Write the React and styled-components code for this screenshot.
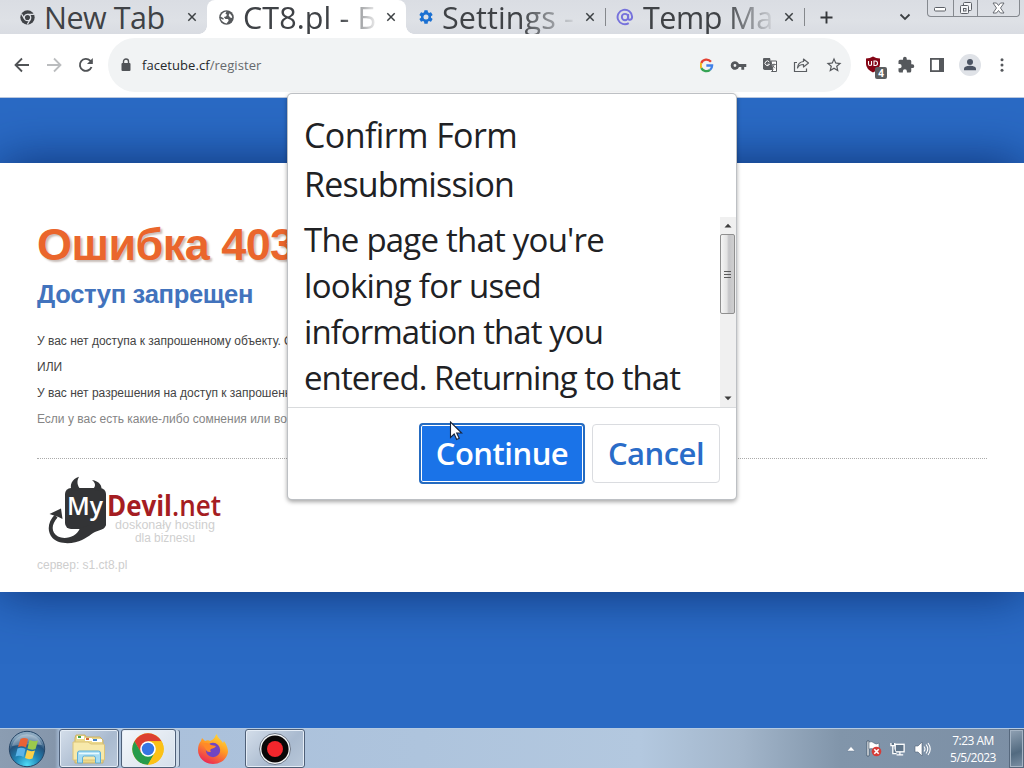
import React from 'react';
import styled, { createGlobalStyle, css } from 'styled-components';

const Global = createGlobalStyle`
  * { box-sizing: border-box; }
  html, body { margin: 0; padding: 0; overflow: hidden; }
  h1, h2, p { margin: 0; font-weight: normal; }
  svg { display: block; flex: none; }
  button { font: inherit; padding: 0; background: none; border: 0; }
`;

const ui = `"Open Sans", "Noto Sans", sans-serif`;

const Desktop = styled.div`
  position: relative;
  width: 1024px;
  height: 768px;
  overflow: hidden;
  display: flex;
  flex-direction: column;
  background: #2a6ac4;
  font-family: ${ui};
`;

/* ---------- tab strip ---------- */
const TabStrip = styled.header`
  height: 34px;
  display: flex;
  background: linear-gradient(#dadde3, #dee1e6 60%, #d9dce2);
`;
const Tab = styled.div`
  width: ${p => p.$w}px;
  height: 34px;
  padding: 0 10px 0 ${p => p.$pad}px;
  display: flex;
  align-items: center;
  position: relative;
  ${p => p.$active && css`
    background: #fff;
    border-radius: 8px 8px 0 0;
    &::before, &::after {
      content: '';
      position: absolute;
      bottom: 0;
      width: 8px;
      height: 8px;
    }
    &::before { left: -8px; background: radial-gradient(circle at 0 0, transparent 7.5px, #fff 8px); }
    &::after { right: -8px; background: radial-gradient(circle at 100% 0, transparent 7.5px, #fff 8px); }
  `}
`;
const TabTitle = styled.span`
  width: ${p => p.$w}px;
  height: 34px;
  margin-left: 9px;
  overflow: hidden;
  white-space: nowrap;
  font-size: 30.5px;
  line-height: 34px;
  letter-spacing: ${p => p.$ls || 0}px;
  color: #3f4246;
  ${p => p.$fade && css`mask-image: linear-gradient(to right, #000 ${p.$fade}px, transparent ${p.$w}px);`}
`;
const TabClose = styled.button`
  margin-left: auto;
  display: flex;
`;
const Divider = styled.i`
  width: 1px;
  height: 18px;
  margin-top: 8px;
  background: #85888c;
`;
const NewTab = styled.button`
  width: 43px;
  display: grid;
  place-items: center;
`;
const TabSearch = styled.button`
  margin: 0 16px 0 auto;
  display: grid;
  place-items: center;
`;
const WindowControls = styled.div`
  width: 93px;
  height: 17px;
  margin-right: 4px;
  display: flex;
  border: 1px solid #85898f;
  border-top: 0;
  border-radius: 0 0 4px 4px;
`;
const WindowButton = styled.button`
  width: ${p => p.$w}px;
  display: grid;
  place-items: center;
  & + & { border-left: 1px solid #85898f; }
`;

/* ---------- toolbar ---------- */
const Toolbar = styled.div`
  height: 64px;
  display: flex;
  align-items: flex-start;
  background: #fff;
  padding: 4px 13px 0 14px;
  border-bottom: 1px solid #b9c7de;
`;
const NavButtons = styled.div`
  width: 94px;
  height: 54px;
  display: flex;
  align-items: center;
  gap: 16px;
`;
const AddressBar = styled.div`
  width: 743px;
  height: 54px;
  padding: 0 8px 0 12px;
  border-radius: 27px;
  background: #f1f3f4;
  display: flex;
  align-items: center;
`;
const Url = styled.span`
  margin-left: 10px;
  font-size: 13px;
  letter-spacing: 0.06px;
  color: #25282c;
  span { color: #66696d; }
`;
const AddressActions = styled.div`
  margin-left: auto;
  display: flex;
  align-items: center;
  gap: 15px;
`;
const Extensions = styled.div`
  height: 54px;
  margin-left: auto;
  display: flex;
  align-items: center;
  gap: 12px;
`;
const Shield = styled.span`
  position: relative;
  width: 21px;
  height: 18px;
  margin-right: -1px;
`;
const Badge = styled.b`
  position: absolute;
  left: 10px;
  top: 11px;
  width: 12px;
  height: 12px;
  border-radius: 2px;
  background: #5b5e60;
  color: #fff;
  font: bold 10px/12px ${ui};
  text-align: center;
`;
const Avatar = styled.span`
  width: 22px;
  height: 22px;
  border-radius: 50%;
  background: #dfe2e7;
  display: grid;
  place-items: center;
`;

/* ---------- web page ---------- */
const Page = styled.main`
  height: 630px;
  padding-top: 65px;
  overflow: hidden;
  background: #2a6ac4;
`;
const ErrorPanel = styled.section`
  height: 429px;
  padding: 56px 37px 0;
  background: #fff;
  box-shadow: 0 0 48px rgba(5, 35, 95, 0.8);
  font-family: "Liberation Sans", Arial, sans-serif;
`;
const ErrorTitle = styled.h1`
  font-size: 45px;
  line-height: 52px;
  font-weight: bold;
  letter-spacing: -0.55px;
  white-space: nowrap;
  color: #ea662c;
  text-shadow: 2px 2px 2px #c9bfba;
`;
const ErrorSubtitle = styled.h2`
  margin-top: 8px;
  font-size: 25.6px;
  line-height: 30px;
  font-weight: bold;
  letter-spacing: -0.35px;
  color: #4273bd;
`;
const Copy = styled.div`
  margin-top: 19px;
  padding-bottom: 26px;
  border-bottom: 1px dotted #aaa;
`;
const Line = styled.p`
  height: 26px;
  font-size: 12px;
  line-height: 26px;
  white-space: nowrap;
  color: ${p => (p.$muted ? '#858585' : '#444')};
`;
const Logo = styled.div`
  margin: 17px 0 0 10px;
`;
const Server = styled.p`
  margin-top: 11px;
  font-size: 12px;
  line-height: 16px;
  color: #cecece;
`;

/* ---------- dialog ---------- */
const Dialog = styled.div`
  position: absolute;
  left: 288px;
  top: 94px;
  width: 448px;
  height: 405px;
  display: flex;
  flex-direction: column;
  background: #fff;
  border-radius: 4px;
  box-shadow: 0 0 0 1px #bdc0c4, 0 2px 4px 1px rgba(0, 0, 0, 0.35);
  color: #202124;
`;
const DialogTitle = styled.h2`
  height: 123px;
  padding: 17px 16px 0;
  font-size: 34px;
  line-height: 49px;
`;
const DialogBody = styled.div`
  height: 191px;
  display: flex;
  justify-content: space-between;
  border-bottom: 1px solid #d9dbdd;
  overflow: hidden;
`;
const Message = styled.p`
  padding: 0 0 0 16px;
  font-size: 33px;
  line-height: 46px;
`;
const TextLine = styled.span`
  display: block;
  white-space: nowrap;
  letter-spacing: ${p => p.$ls}px;
`;
const Scrollbar = styled.div`
  width: 16px;
  height: 190px;
  display: flex;
  flex-direction: column;
  align-items: center;
  background: #f0f0f0;
`;
const ScrollArrow = styled.div`
  height: 17px;
  margin-top: ${p => (p.$end ? 'auto' : 0)};
  display: grid;
  place-items: center;
`;
const Thumb = styled.div`
  width: 15px;
  height: 80px;
  margin-right: 1px;
  border: 1px solid #8f8f8f;
  border-radius: 2px;
  background: linear-gradient(to right, #f5f5f5, #e3e3e3 45%, #c5c5c8 60%, #cfcfcf);
  display: grid;
  place-items: center;
`;
const DialogActions = styled.div`
  padding: 15px 16px 0 0;
  display: flex;
  justify-content: flex-end;
  align-items: center;
  gap: 7px;
`;
const DialogButton = styled.button`
  width: ${p => (p.$primary ? 166 : 128)}px;
  height: ${p => (p.$primary ? 61 : 59)}px;
  padding-bottom: 2px;
  border-radius: 4px;
  font-size: 31px;
  line-height: 54px;
  font-weight: 600;
  letter-spacing: ${p => p.$ls}px;
  white-space: nowrap;
  ${p => p.$primary ? css`
    color: #fff;
    background: #1a73e8;
    border: 2px solid #256bc0;
    box-shadow: inset 0 0 0 1px #fff;
  ` : css`
    color: #2a6cc8;
    background: #fff;
    border: 1px solid #dadce0;
  `}
`;
const Pointer = styled.svg`
  position: absolute;
  left: 449px;
  top: 421px;
`;

/* ---------- taskbar ---------- */
const Taskbar = styled.footer`
  height: 40px;
  display: flex;
  border-top: 1px solid #b4cae2;
  background: linear-gradient(to right, #8b9db2 0, #8596ab 55px, #a9bfda 60px, #aec4dd 420px, #b3c8df 640px, #a3b6cb 740px, #8195aa 840px, #7c8fa5 1024px);
`;
const Start = styled.div`
  width: 59px;
  padding: 0 0 0 8px;
  display: flex;
  align-items: center;
`;
const TaskButton = styled.div`
  width: ${p => p.$w}px;
  height: 39px;
  margin-right: ${p => p.$mr || 0}px;
  padding-right: ${p => (p.$stack ? 1 : 0)}px;
  display: grid;
  place-items: center;
  ${p => p.$open && css`
    border: 1px solid #4f6078;
    border-radius: 3px;
    box-shadow: inset 0 0 0 1px #e5edf6${p.$stack ? ', 4px 0 0 -1px #c9d7e6, 5px 0 0 -1px #596b84' : ''};
    background: ${p.$stack ? 'linear-gradient(135deg, #f4f7fb, #d5dfea)' : 'linear-gradient(135deg, #d4deea, #a9bacf 60%, #b9c8da)'};
  `}
`;
const Tray = styled.div`
  margin-left: auto;
  display: flex;
  align-items: center;
`;
const TrayIcons = styled.div`
  display: flex;
  align-items: center;
  gap: 8px;
`;
const Clock = styled.time`
  width: 74px;
  margin-left: 4px;
  padding-left: 2px;
  text-align: center;
  font-size: 12px;
  line-height: 17px;
  letter-spacing: -0.5px;
  color: #fff;
  span { display: block; }
`;
const ShowDesktop = styled.div`
  width: 15px;
  height: 39px;
  border: 1px solid #56687d;
  box-shadow: inset 0 0 0 1px #a5b4c4;
  background: linear-gradient(160deg, #91a2b4, #526a80 60%, #7c90a5);
`;

const G = ({ children, w = 16, h = w, vb = '0 0 24 24', c = '#55585c' }) => (
  <svg width={w} height={h} viewBox={vb} fill={c}>{children}</svg>
);

const Cross = () => (
  <svg width="10" height="10" viewBox="0 0 10 10" stroke="#3c4043" strokeWidth="1.5"><path d="M1.3 1.3l7.4 7.4M8.7 1.3L1.3 8.7" /></svg>
);

const ChromeMono = () => (
  <svg width="15" height="15" viewBox="0 0 14 14">
    <circle cx="7" cy="7" r="6.7" fill="#404347" />
    <circle cx="7" cy="7" r="3" fill="none" stroke="#dee1e6" strokeWidth="1.2" />
    <path d="M7 4h6M4.4 8.5L1.5 3.7M9.6 8.5L6.8 13.5" stroke="#dee1e6" strokeWidth="1.2" />
  </svg>
);

const DevilLogo = () => (
  <svg width="178" height="70" viewBox="0 0 178 70">
    <g fill="#333436">
      <rect x="18" y="12" width="41" height="41" rx="6" />
      <path d="M25 15C22 9 25 3 32 .7C29.500 5 30 10 34 13.500Z" />
      <path d="M54 15C56 10 52 5 45 4C49 7 49 11 45 13.500Z" />
      <path d="M59 44V49Q58 53 52 54.500C46 56 43 60 35 64C27 68 12 69 5.500 62C-.5 55 1 46 7.500 39L10.500 41.500C4 49 4 56 11 60.500C18 64 30 61 33 52Z" />
      <path d="M14 32.500L2.500 38 8.500 40 11.500 41 15.500 43Z" />
    </g>
    <g fontFamily="Open Sans, sans-serif" fill="#a51d22">
      <text x="20" y="39" fontSize="26" fontWeight="600" fill="#fff" textLength="36" lengthAdjust="spacingAndGlyphs">My</text>
      <text x="60" y="40" fontSize="28" fontWeight="700" textLength="65" lengthAdjust="spacingAndGlyphs">Devil</text>
      <text x="125" y="40" fontSize="28" fontWeight="600" textLength="49" lengthAdjust="spacingAndGlyphs">.net</text>
    </g>
    <g fontFamily="Liberation Sans, sans-serif" fontSize="12" fill="#cfcfcf">
      <text x="68" y="53" textLength="100" lengthAdjust="spacingAndGlyphs">doskonały hosting</text>
      <text x="88" y="66" textLength="60" lengthAdjust="spacingAndGlyphs">dla biznesu</text>
    </g>
  </svg>
);

const StartOrb = () => (
  <svg width="38" height="38" viewBox="0 0 38 38">
    <defs>
      <radialGradient id="orb" cx=".5" cy=".95" r=".85">
        <stop offset="0" stopColor="#50dcf6" /><stop offset=".4" stopColor="#2187b8" /><stop offset=".75" stopColor="#24527c" /><stop offset="1" stopColor="#8ca9c0" />
      </radialGradient>
    </defs>
    <circle cx="19" cy="19" r="17.700" fill="url(#orb)" stroke="#264667" />
    <path d="M4 16a15.500 15 0 0 1 30-1Q19 13 4 16Z" fill="#fff" opacity=".28" />
    <path d="M12.500 9Q16 7 20 9L18 17.500Q14 15.500 10 17Z" fill="#ea6235" />
    <path d="M21.500 10Q26 12 30 10.500L27.500 19Q24 20.500 19.500 18.500Z" fill="#9bca4c" />
    <path d="M9.500 18.500Q13.500 17 17.500 19L15.500 27Q11.500 25 7.500 26.500Z" fill="#5bb3e8" />
    <path d="M19 20Q23 22 27 20.500L24.500 28.500Q20.500 30 17 28Z" fill="#fbd04a" />
  </svg>
);

const Folder = () => (
  <svg width="36" height="32" viewBox="0 0 36 32">
    <path d="M4 5l1-3h9l1 2h14l3 3v23H4Z" fill="#ecd98b" stroke="#cbb166" />
    <path d="M6 3h7v3H6Z" fill="#fff" /><path d="M7 3h3v2H7Z" fill="#40a148" />
    <path d="M14 5h7v3h-7Z" fill="#fff" /><path d="M15 5h3v2h-3Z" fill="#d5683d" />
    <path d="M21 6h10v3H21Z" fill="#fff" /><path d="M22 6h4v2h-4Z" fill="#4a86c8" />
    <path d="M2 9h15l3 2h12.500l1 1v15H2Z" fill="#f7e9ab" stroke="#dcc478" />
    <path d="M6.500 30V20q0-2 2-2h19q2 0 2 2v10h-5v-5q0-2-2-2h-9q-2 0-2 2v5Z" fill="#a7dcf3" stroke="#5eaed6" />
    <path d="M8 20.500h20" stroke="#e8faff" strokeWidth="1.500" />
  </svg>
);

const Chrome = () => (
  <svg width="32" height="32" viewBox="0 0 48 48">
    <circle cx="24" cy="24" r="23.500" fill="#fbc116" />
    <path d="M3.700 12.200A23.500 23.500 0 0 1 44.300 12.200H24L13.700 30Z" fill="#dc3f31" />
    <path d="M3.700 12.200A23.500 23.500 0 0 0 24 47.500L34.200 29.800 24 24 13.800 29.800Z" fill="#269b4b" />
    <path d="M24 12.200h20.300A23.500 23.500 0 0 1 24 47.500L34.200 29.900Z" fill="#fbc116" />
    <circle cx="24" cy="24" r="11.700" fill="#fff" /><circle cx="24" cy="24" r="9.300" fill="#3676e3" />
  </svg>
);

const Firefox = () => (
  <svg width="32" height="32" viewBox="0 0 32 32">
    <defs><linearGradient id="fox" x1=".8" y1="0" x2=".3" y2="1"><stop offset="0" stopColor="#ffe238" /><stop offset=".45" stopColor="#ff9a25" /><stop offset="1" stopColor="#eb2456" /></linearGradient></defs>
    <path d="M20 1c0 4 4 5 6 9l1-2c3 4 4 8 4 11-1 7-7 12-15 12S1 25 1 17c0-4 1-7 3-9l1-3 3 3c2-1 4-1 5 0 2-1 4-2 5-4 0-1 1-2 2-3Z" fill="url(#fox)" />
    <circle cx="16" cy="17" r="7.200" fill="#7145c2" />
    <path d="M5 11c4-2 7-1 9 1l5 1c-1 2-3 2-5 3-1 1-1 2 0 3-2 0-4 0-5-2-1-2-2-4-4-6Z" fill="#ff8a28" />
  </svg>
);

const Recorder = () => (
  <svg width="32" height="32" viewBox="0 0 32 32"><circle cx="16" cy="16" r="15.500" fill="#f5f7f8" stroke="#6d7887" /><circle cx="16" cy="16" r="13.600" fill="#090707" /><circle cx="16" cy="16" r="8" fill="#f4262c" /></svg>
);

export default function App() {
  return (
    <Desktop>
      <Global />
      <TabStrip>
        <Tab $w={207} $pad={20}>
          <ChromeMono />
          <TabTitle $w={130} $ls={-0.5}>New Tab</TabTitle>
          <TabClose><Cross /></TabClose>
        </Tab>
        <Tab $w={199} $pad={12} $active>
          <svg width="15" height="15" viewBox="0 0 14 14"><circle cx="7" cy="7" r="6.800" fill="#55585b" /><path d="M7 1.500l-1 2 1.500 1-1 1.500-2 .5L6 8.500H8.500L9 10l-2 2.500Q3 12 1.500 8l2.500 1 .5-1-3-2Q3 2 7 1.500Z M10 3l2 2.500.3 2-2-.5-1.300-2Z" fill="#fff" /></svg>
          <TabTitle $w={137} $fade={96} $ls={0.1}>CT8.pl - Б</TabTitle>
          <TabClose><Cross /></TabClose>
        </Tab>
        <Tab $w={199} $pad={13}>
          <G w={14} c="#1b70d2" vb="2 2 20 20"><path d="M19.140 12.940c.04-.3.06-.61.06-.94s-.02-.64-.07-.94l2.030-1.580a.49.49 0 0 0 .12-.61l-1.920-3.320a.49.49 0 0 0-.59-.22l-2.390.96c-.5-.38-1.030-.7-1.620-.94l-.36-2.540A.48.48 0 0 0 13.920 2.400h-3.840a.48.48 0 0 0-.47.410l-.36 2.540c-.59.240-1.130.570-1.620.940l-2.390-.96a.49.49 0 0 0-.59.220L2.740 8.870a.48.48 0 0 0 .12.610l2.030 1.580c-.05.300-.09.630-.09.940s.02.640.07.940l-2.030 1.580a.49.49 0 0 0-.12.610l1.920 3.320c.12.220.370.290.590.220l2.390-.96c.5.380 1.030.700 1.620.940l.36 2.540c.05.240.240.410.480.410h3.840c.24 0 .44-.17.47-.41l.36-2.540c.59-.24 1.130-.56 1.620-.94l2.390.96c.22.080.470 0 .59-.22l1.920-3.320a.48.48 0 0 0-.12-.61ZM12 15.600a3.600 3.600 0 1 1 0-7.200 3.600 3.600 0 0 1 0 7.200Z" /></G>
          <TabTitle $w={137} $fade={78} $ls={0.1}>Settings -</TabTitle>
          <TabClose><Cross /></TabClose>
        </Tab>
        <Divider />
        <Tab $w={198} $pad={10}>
          <svg width="18" height="18" viewBox="0 0 24 24" fill="none" stroke="#7672dc" strokeWidth="2.600"><circle cx="12" cy="12" r="4.200" /><path d="M16.200 8v5.200c0 4 5.300 3.200 5.300-1.500A9.700 9.700 0 1 0 17 20.200" /></svg>
          <TabTitle $w={134} $fade={82} $ls={-0.5}>Temp Ma</TabTitle>
          <TabClose><Cross /></TabClose>
        </Tab>
        <Divider />
        <NewTab><svg width="13" height="13" viewBox="0 0 13 13" stroke="#34373a" strokeWidth="1.900"><path d="M6.500 .5v12M.5 6.500h12" /></svg></NewTab>
        <TabSearch><svg width="12" height="8" viewBox="0 0 12 8" fill="none" stroke="#3c4043" strokeWidth="1.800"><path d="M1.500 1.500L6 6l4.500-4.500" /></svg></TabSearch>
        <WindowControls>
          <WindowButton $w={25}><svg width="14" height="10" viewBox="0 0 14 10"><rect x="1.500" y="4.500" width="11" height="3.500" rx="1" fill="#fff" stroke="#5c6067" /></svg></WindowButton>
          <WindowButton $w={25}><svg width="14" height="14" viewBox="0 0 14 14" fill="#f5f6f8" stroke="#5c6067"><rect x="4.500" y="1.500" width="8" height="8" rx="1" /><rect x="1.500" y="4.500" width="8" height="8" rx="1" /><rect x="4.500" y="7.500" width="2.500" height="2.500" /></svg></WindowButton>
          <WindowButton $w={42}><svg width="13" height="12" viewBox="0 0 13 12" fill="#fff" stroke="#5c6067" strokeWidth=".9"><path d="M1 1h3.500l2 2.500L8.500 1H12L8.500 6l3.500 5H8.500l-2-2.500-2 2.500H1l3.500-5Z" /></svg></WindowButton>
        </WindowControls>
      </TabStrip>

      <Toolbar>
        <NavButtons>
          <svg width="16" height="16" viewBox="0 0 16 16" fill="none" stroke="#505356" strokeWidth="1.800"><path d="M15 8H2M8 1.500L1.500 8 8 14.500" /></svg>
          <svg width="16" height="16" viewBox="0 0 16 16" fill="none" stroke="#bbbdbf" strokeWidth="1.800"><path d="M1 8h13M8 1.500L14.500 8 8 14.500" /></svg>
          <svg width="16" height="16" viewBox="0 0 16 16" fill="none" stroke="#505356" strokeWidth="1.900"><path d="M13.500 10a6 6 0 1 1-1.300-6.300L14 5.500" /><path d="M14.800 1v6H9Z" fill="#505356" stroke="none" /></svg>
        </NavButtons>
        <AddressBar>
          <svg width="12" height="14" viewBox="0 0 12 14"><rect x="1.500" y="5" width="9" height="8" rx="1" fill="#505357" /><path d="M3.500 6V3.500a2.500 2.500 0 0 1 5 0V6" fill="none" stroke="#505357" strokeWidth="1.400" /></svg>
          <Url>facetube.cf<span>/register</span></Url>
          <AddressActions>
            <svg width="15" height="15" viewBox="1 -1 26 26" fill="none" strokeWidth="4"><path d="M20 5.500A10 10 0 0 0 3.200 7.500" stroke="#e34133" /><path d="M3.200 7.500a10 10 0 0 0 0 9" stroke="#f3b51b" /><path d="M3.200 16.500A10 10 0 0 0 18.500 19.500" stroke="#36a455" /><path d="M18.500 19.500q3.500-3 3.500-7.500H12" stroke="#4080e8" /></svg>
            <G w={17}><path d="M12.650 10A6 6 0 1 0 12.650 14H16v4h4v-4h3v-4ZM7 14a2 2 0 1 1 0-4 2 2 0 0 1 0 4Z" /></G>
            <svg width="16" height="16" viewBox="0 0 16 16"><path d="M1.500 1H8l3 12H2.500L1 12V2Z" fill="#5a5d61" /><path d="M9 4h5.500v10.500H9.500L11 13Z" fill="#fff" stroke="#5a5d61" /><path d="M7.300 5A2.300 2.300 0 1 0 7.500 7.200H5.500" fill="none" stroke="#fff" /><path d="M10 7.500h4M12 6.500v1c0 2-1 3-1.500 3.500m.2-3c.5 1.500 1.500 2.500 2.500 3" fill="none" stroke="#5a5d61" strokeWidth=".8" /></svg>
            <svg width="17" height="16" viewBox="0 0 17 16" fill="none" stroke="#5a5d61" strokeWidth="1.200"><path d="M4 5.500H1.500v9h12V11.500" /><path d="M10.500 2l5 4-5 4V7.500Q6 7.500 4.500 11 5 5 10.500 4.500Z" strokeLinejoin="round" /></svg>
            <G w={18}><path d="m22 9.240-7.190-.62L12 2 9.190 8.630 2 9.240l5.460 4.730L5.820 21 12 17.270 18.180 21l-1.630-7.030ZM12 15.400l-3.760 2.270 1-4.280-3.320-2.880 4.380-.38L12 6.100l1.710 4.040 4.380.38-3.320 2.880 1 4.280Z" /></G>
          </AddressActions>
        </AddressBar>
        <Extensions>
          <Shield>
            <svg width="16" height="17" viewBox="0 0 16 17"><path d="M8 .5Q11 2.500 15 2.500V8q0 5-7 8.500Q1 13 1 8V2.500Q5 2.500 8 .5Z" fill="#840515" /><path d="M3.500 5v3q0 1.500 1.500 1.500T6.500 8V5v4.500M9 5v4.500h1.500q2 0 2-2.200T10.500 5Z" fill="none" stroke="#fff" strokeWidth="1.100" /></svg>
            <Badge>4</Badge>
          </Shield>
          <G w={18}><path d="M20.500 11H19V7a2 2 0 0 0-2-2h-4V3.500a2.500 2.500 0 0 0-5 0V5H4a2 2 0 0 0-2 2v3.800h1.500a2.700 2.700 0 0 1 0 5.400H2V20c0 1.100.900 2 2 2h3.800v-1.500a2.700 2.700 0 0 1 5.400 0V22H17a2 2 0 0 0 2-2v-4h1.500a2.500 2.500 0 0 0 0-5Z" /></G>
          <svg width="20" height="16" viewBox="0 0 20 16"><rect x="3.900" y="1.900" width="12.200" height="12.200" fill="#fff" stroke="#55585c" strokeWidth="1.800" /><path d="M12 1h5v14h-5Z" fill="#55585c" /></svg>
          <Avatar><G w={18} c="#4c5463"><circle cx="12" cy="8" r="4" /><path d="M4 19v-2c0-3 5-4 8-4s8 1 8 4v2Z" /></G></Avatar>
          <G w={18}><circle cx="12" cy="5" r="2" /><circle cx="12" cy="12" r="2" /><circle cx="12" cy="19" r="2" /></G>
        </Extensions>
      </Toolbar>

      <Page>
        <ErrorPanel>
          <ErrorTitle>Ошибка 403</ErrorTitle>
          <ErrorSubtitle>Доступ запрещен</ErrorSubtitle>
          <Copy>
            <Line>У вас нет доступа к запрошенному объекту. О</Line>
            <Line>ИЛИ</Line>
            <Line>У вас нет разрешения на доступ к запрошенн</Line>
            <Line $muted>Если у вас есть какие-либо сомнения или во</Line>
          </Copy>
          <Logo><DevilLogo /></Logo>
          <Server>сервер: s1.ct8.pl</Server>
        </ErrorPanel>
      </Page>

      <Taskbar>
        <Start><StartOrb /></Start>
        <TaskButton $w={60} $mr={2} $open><Folder /></TaskButton>
        <TaskButton $w={55} $mr={9} $open $stack><Chrome /></TaskButton>
        <TaskButton $w={56} $mr={4}><Firefox /></TaskButton>
        <TaskButton $w={60} $open><Recorder /></TaskButton>
        <Tray>
          <TrayIcons>
            <svg width="12" height="8" viewBox="0 0 12 8"><path d="M2 6l4-4.500L10 6Z" fill="#fff" stroke="#667b92" strokeWidth=".5" /></svg>
            <svg width="17" height="17" viewBox="0 0 17 17"><path d="M2 1h2v15H2Z" fill="#fff" stroke="#34475d" strokeWidth=".7" /><path d="M4 2q3-1 5 1t5 0v7q-3 1-5-.5T4 9Z" fill="#fff" stroke="#526477" strokeWidth=".6" /><circle cx="11.500" cy="11.500" r="4.800" fill="#d63c38" /><path d="M9.300 9.300l4.400 4.400M13.700 9.300l-4.400 4.400" stroke="#fff" strokeWidth="1.600" /></svg>
            <svg width="16" height="16" viewBox="0 0 17 16" fill="#60758a" stroke="#fff" strokeWidth="1.400"><rect x="5.500" y="3" width="9.500" height="8" /><path d="M7 14.300h7M10.500 11v3M3 5v8h4M1 1.500v3h4v-3M3 4v2" /></svg>
            <svg width="17" height="16" viewBox="0 0 17 16"><path d="M1 5h3l4-4v14l-4-4H1Z" fill="#fff" stroke="#506276" strokeWidth=".6" /><path d="M10 5.500q2 2.500 0 5M12 3.500q3.500 4.500 0 9M14 2q4.500 6 0 12" fill="none" stroke="#fff" strokeWidth="1.100" /></svg>
          </TrayIcons>
          <Clock><span>7:23 AM</span><span>5/5/2023</span></Clock>
          <ShowDesktop />
        </Tray>
      </Taskbar>

      <Dialog role="dialog">
        <DialogTitle>
          <TextLine $ls={-0.6}>Confirm Form</TextLine>
          <TextLine $ls={-0.85}>Resubmission</TextLine>
        </DialogTitle>
        <DialogBody>
          <Message>
            <TextLine $ls={-0.78}>The page that you're</TextLine>
            <TextLine $ls={-0.7}>looking for used</TextLine>
            <TextLine $ls={-0.95}>information that you</TextLine>
            <TextLine $ls={-0.94}>entered. Returning to that</TextLine>
          </Message>
          <Scrollbar>
            <ScrollArrow><svg width="8" height="5" viewBox="0 0 8 5"><path d="M.5 4.500L4 .8l3.500 3.700Z" fill="#3d3d3d" /></svg></ScrollArrow>
            <Thumb><svg width="7" height="9" viewBox="0 0 7 9" stroke="#5b5b5b"><path d="M0 1.500h7M0 4.500h7M0 7.500h7" /></svg></Thumb>
            <ScrollArrow $end><svg width="8" height="5" viewBox="0 0 8 5"><path d="M.5 .5L4 4.200 7.500 .5Z" fill="#3d3d3d" /></svg></ScrollArrow>
          </Scrollbar>
        </DialogBody>
        <DialogActions>
          <DialogButton $primary $ls={-0.5}>Continue</DialogButton>
          <DialogButton $ls={-0.5}>Cancel</DialogButton>
        </DialogActions>
      </Dialog>

      <Pointer width="14" height="21" viewBox="0 0 14 21"><path d="M1.500 1v15.500l3.700-3.500 2.500 5.500 2.500-1.200-2.500-5.300h5Z" fill="#fff" stroke="#16233a" strokeWidth="1.100" /></Pointer>
    </Desktop>
  );
}
